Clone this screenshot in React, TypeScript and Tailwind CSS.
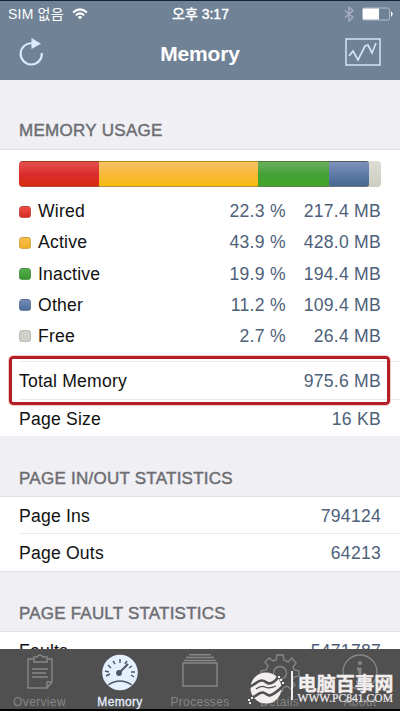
import React from "react";

const usage = [
  { name: "Wired", pct: "22.3 %", size: "217.4 MB", swatch: "from-[#ee4b49] to-[#d42a20]", bar: "w-[80px] from-[#e2504f] via-[#dc2c2c] to-[#d92c0b]" },
  { name: "Active", pct: "43.9 %", size: "428.0 MB", swatch: "from-[#f8be4c] to-[#efb023]", bar: "w-[159px] from-[#f7c266] via-[#f8b938] to-[#f7bb00]" },
  { name: "Inactive", pct: "19.9 %", size: "194.4 MB", swatch: "from-[#54ad4d] to-[#36992e]", bar: "w-[71px] from-[#69ae5e] via-[#43a236] to-[#42a42a]" },
  { name: "Other", pct: "11.2 %", size: "109.4 MB", swatch: "from-[#7289b7] to-[#4e6e99]", bar: "w-[40px] rounded-r-[3px] from-[#8093bb] via-[#5f7aa8] to-[#45698f]" },
  { name: "Free", pct: "2.7 %", size: "26.4 MB", swatch: "from-[#d2d2cc] to-[#d0d0c9]", bar: "" },
];

function Section({ title, className }: { title: string; className: string }) {
  return (
    <h2 className={`shrink-0 whitespace-nowrap border-b border-[#e2e2e6] bg-[#efeff4] pl-[19px] text-[17px] leading-5 text-[#6d6d72] [-webkit-text-stroke:0.45px_#6d6d72] ${className}`}>
      {title}
    </h2>
  );
}

function Row({ label, value, className }: { label: string; value: string; className: string }) {
  return (
    <div className={`flex shrink-0 items-center justify-between pr-[19px] pt-[2px] ${className}`}>
      <span>{label}</span>
      <span className="tracking-[0.25px] text-[#4d5f79]">{value}</span>
    </div>
  );
}

function Tab({ label, active, className, children }: { label: string; active?: boolean; className: string; children: React.ReactNode }) {
  return (
    <div className={`flex h-[60px] flex-col items-center text-[12px] leading-[14px] ${active ? "text-[#e4efff]" : "text-[#868686]"} ${className}`}>
      <svg className="mt-[5px] h-[38px] w-[40px] shrink-0" viewBox="0 0 40 38" fill="none" stroke="currentColor" strokeWidth="1.4">
        {children}
      </svg>
      <span className={`mt-[3px] whitespace-nowrap tracking-[0.35px] ${active ? "[-webkit-text-stroke:0.3px_#e4efff]" : ""}`}>{label}</span>
    </div>
  );
}

export default function App() {
  return (
    <div className="relative flex h-[711px] w-[400px] flex-col overflow-hidden bg-white font-['Liberation_Sans','Noto_Sans_CJK_KR',sans-serif] text-[17.6px] tracking-[0.2px] text-[#111]">
      <header className="h-[80px] shrink-0 border-t border-[#14233c] bg-[#6f8296] text-white">
        <div className="grid h-[25px] grid-cols-[1fr_auto_1fr] items-center pl-[8px] pr-[7px] text-[14px] leading-none">
          <div className="flex items-center gap-[8px]">
            <span className="whitespace-nowrap">SIM 없음</span>
            <svg className="h-[12px] w-[16px]" viewBox="0 0 16 12" fill="none" stroke="white" strokeWidth="2">
              <path d="M1 4.5Q8-1.8 15 4.5M3.8 7.3Q8 3.5 12.2 7.3" />
              <path d="M5.7 9.1Q8 7.1 10.3 9.1L8 11.6Z" fill="white" stroke="none" />
            </svg>
          </div>
          <span className="whitespace-nowrap tracking-[0px] [-webkit-text-stroke:0.4px_white]">오후 3:17</span>
          <div className="flex items-center justify-end gap-[8px]">
            <svg className="h-[16px] w-[10px]" viewBox="0 0 10 16" fill="none" stroke="#a9adc9" strokeWidth="1.3">
              <path d="M1 4.5L9 11.3L5 15V1L9 4.7L1 11.5" />
            </svg>
            <svg className="h-[14px] w-[31px]" viewBox="0 0 31 14">
              <rect x=".5" y="1" width="27" height="12" rx="1.5" fill="none" stroke="#aebccb" />
              <path d="M1 1.5H17V12.5H1Z" fill="white" />
              <path d="M29 4L31 7L29 10Z" fill="white" />
            </svg>
          </div>
        </div>
        <div className="grid h-[54px] grid-cols-[1fr_auto_1fr] items-center px-[19px]">
          <svg className="-mt-[2px] h-[30px] w-[26px]" viewBox="0 0 26 30" fill="none" stroke="#dceaff" strokeWidth="2.1">
            <path d="M13.5 6.4A10.6 10.6 0 1 0 22.8 16" />
            <path d="M12.5 1L22 6.7L12.5 12Z" fill="#dceaff" stroke="none" />
          </svg>
          <h1 className="mt-[2px] text-[21px] font-bold leading-6 tracking-[-0.2px]">Memory</h1>
          <svg className="-mt-[2px] ml-auto mr-0 h-[28px] w-[36px]" viewBox="0 0 36 28" fill="none" stroke="#d3e4f8" strokeWidth="1.5">
            <path d="M1 1H35V27H1Z" />
            <path strokeWidth="1.7" d="M4 18L8 13L13 22L20 8L23 7L27 15L31 5" />
          </svg>
        </div>
      </header>

      <Section title="MEMORY USAGE" className="h-[70px] pt-[41px] tracking-[0.3px]" />
      <div className="h-[211px] shrink-0 pl-[19px] pr-[19px] pt-[11px]">
        <div className="flex h-[26px] overflow-hidden rounded-[4px] bg-gradient-to-b from-[#dddcd5] to-[#cccdc2]">
          {usage.slice(0, 4).map((u) => (
            <div key={u.name} className={`h-full shrink-0 border-y border-[#5a4a3070] bg-gradient-to-b ${u.bar}`} />
          ))}
        </div>
        <div className="mt-[9px]">
          {usage.map((u) => (
            <div key={u.name} className="grid h-[31.1px] grid-cols-[19px_1fr_90px_95px] items-center">
              <i className={`size-[12px] rounded-[3.5px] border border-[#77777744] bg-gradient-to-b ${u.swatch}`} />
              <span>{u.name}</span>
              <span className="text-right tracking-[0.3px] text-[#4d5f79]">{u.pct}</span>
              <span className="text-right tracking-[0.25px] text-[#4d5f79]">{u.size}</span>
            </div>
          ))}
        </div>
      </div>
      <div className="relative shrink-0">
        <Row label="Total Memory" value="975.6 MB" className="ml-[19px] h-[39px] border-y border-[#e9e9eb]" />
        <div className="absolute left-[9px] top-[-5px] h-[49px] w-[381px] rounded-[4px] border-[3px] border-[#b41e28] outline outline-1 outline-[#f5c8c5]" />
      </div>
      <Row label="Page Size" value="16 KB" className="ml-[19px] h-[36px]" />
      <Section title="PAGE IN/OUT STATISTICS" className="h-[61px] pt-[33px] tracking-[0.25px]" />
      <Row label="Page Ins" value="794124" className="ml-[19px] h-[37px] border-b border-[#e9e9eb]" />
      <Row label="Page Outs" value="64213" className="ml-[19px] h-[37px]" />
      <Section title="PAGE FAULT STATISTICS" className="h-[61px] border-t pt-[32px] tracking-[0.2px]" />
      <Row label="Faults" value="5471787" className="ml-[19px] h-[37px]" />

      <nav className="absolute bottom-0 left-0 flex h-[62px] w-[400px] border-b-2 border-black bg-[#505050]">
        <Tab label="Overview" className="w-[79px]">
          <path d="M14 5H8V34H27L32 28V5H27M14 3H17Q20-1 23 3H27V8H14ZM27 34V28H32M12 15H28M12 19H26M12 23H28" />
        </Tab>
        <Tab label="Memory" active className="w-[82px]">
          <circle cx="20" cy="18.5" r="17.8" fill="#e4efff" stroke="none" />
          <g stroke="#4e5763">
            <path strokeWidth="1.5" d="M8 31Q20 23 32 31" />
            <path d="M6 22L10 20M5 17L9 18M8 11L11 14M13 7L15 10M20 5V9M27 7L25 10M32 12L29 14M35 18L31 18M34 23L31 21" />
            <path strokeWidth="2" d="M19 19L28 10" />
            <circle cx="19" cy="19" r="2.2" fill="#4e5763" />
          </g>
        </Tab>
        <Tab label="Processes" className="w-[78px]">
          <path d="M3 9H37V32H3ZM4 6.5H36M6 3.5H34M9 .8H31" />
        </Tab>
        <Tab label="Details" className="w-[81px]">
          <circle cx="20" cy="19" r="6.5" />
          <path d="M17 1H23L24 6L28 8L32 4L36 9L33 13L34 16L39 17V22L34 23L32 27L35 31L31 35L27 32L23 34L22 38H17L16 34L12 32L8 35L4 30L7 26L5 23L1 22V17L6 16L8 12L5 8L9 4L13 7L16 6Z" />
        </Tab>
        <Tab label="About" className="w-[80px]">
          <circle cx="20" cy="18" r="17" />
          <path strokeWidth="3" d="M20 14V28M17 15H21M16 28H24" />
          <circle cx="20" cy="9" r="2" fill="currentColor" stroke="none" />
        </Tab>
      </nav>

      <div className="absolute left-[246px] top-[671px] flex h-[34px] w-[152px] text-[#f3eeee]">
        <svg className="h-[34px] w-[40px] shrink-0" viewBox="0 0 40 34" fill="currentColor">
          <circle cx="20" cy="17" r="15.5" />
          <path fill="none" stroke="#505050" strokeWidth="2.6" d="M3 16C9 14 12 9 16 9.500C20 9.500 21 14 25 12Q29 11 33 5M7 26C11 25 13 21 17 21.500C21 22 21 26 25 24Q30 22 37 15" />
          <path fill="none" stroke="#505050" strokeWidth="1.2" d="M10 18Q15 14 19 16T30 15" />
          <path d="M2 28H4V30H2ZM5 26H7V28H5ZM3 31H5V33H3ZM34 8H36V10H34ZM36 11H38V13H36ZM32 5H34V7H32Z" />
        </svg>
        <i className="ml-[5px] mr-[5px] h-[29px] w-[1.5px] shrink-0 bg-[#f3eeee]" />
        <div className="flex flex-col whitespace-nowrap">
          <span className="h-[22px] font-['Noto_Sans_CJK_SC',sans-serif] text-[19.2px] font-bold leading-[24px] tracking-[0px] [-webkit-text-stroke:0.4px_#f3eeee]">电脑百事网</span>
          <span className="font-['Liberation_Serif',serif] text-[11.5px] leading-[10px] tracking-[0.05px] [-webkit-text-stroke:0.2px_#f3eeee]">WWW.PC841.COM</span>
        </div>
      </div>
    </div>
  );
}
